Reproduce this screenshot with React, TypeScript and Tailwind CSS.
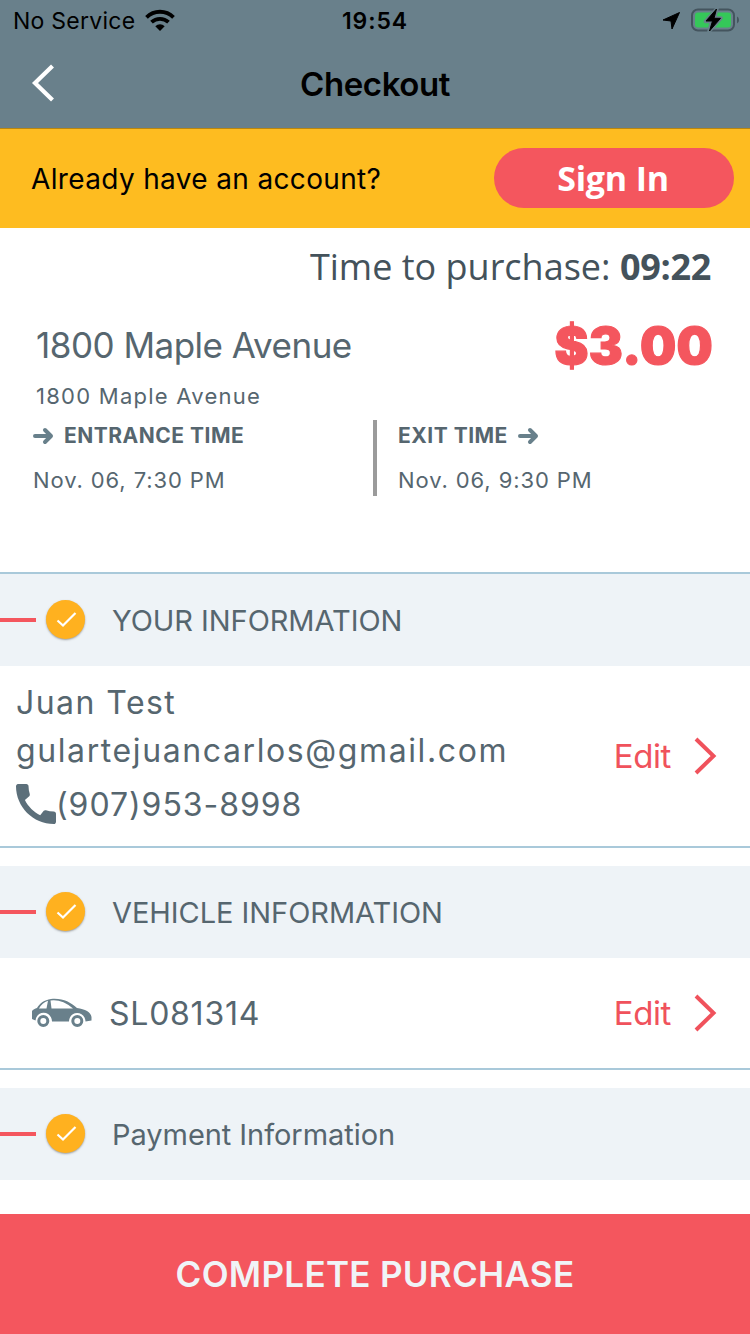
import React from "react";

const inter = "font-['Inter',sans-serif]";
const openSans = "font-['Open_Sans',sans-serif]";

function Arrow() {
  return (
    <svg width="22" height="18" viewBox="0 0 22 18" fill="none" stroke="#68808b" strokeWidth="4" strokeLinecap="round" strokeLinejoin="round">
      <path d="M3 9H18.500M13 3L19 9L13 15" />
    </svg>
  );
}

function SectionHeader({ title, spacing }: { title: string; spacing: string }) {
  return (
    <div className="flex h-[92px] shrink-0 items-center bg-[#eef3f7]">
      <div className="h-1 w-9 bg-[#f4565e]" />
      <div className="mb-[2px] ml-[10px] flex size-[39px] items-center justify-center rounded-full bg-[#ffb11f] shadow-[0_1px_2px_rgba(80,80,80,0.5)]">
        <svg width="39" height="39" viewBox="0 0 39 39" fill="none" stroke="#fff" strokeWidth="2.2">
          <path d="M11.500 20.500L17 25.500L29.500 13" />
        </svg>
      </div>
      <h2 className={`ml-[27px] pt-[2px] text-[29px] leading-[36px] whitespace-nowrap ${spacing}`}>{title}</h2>
    </div>
  );
}

function EditLink() {
  return (
    <button className="ml-auto flex items-center pr-[33px] text-[#f0525c]">
      <span className="text-[33px] leading-[40px] tracking-[-0.4px]">Edit</span>
      <svg className="ml-[23px]" width="23" height="38" viewBox="0 0 23 38" fill="none" stroke="currentColor" strokeWidth="4">
        <path d="M2 2L19.500 19L2 36" />
      </svg>
    </button>
  );
}

export default function App() {
  return (
    <div className={`flex h-[1334px] w-[750px] flex-col overflow-hidden bg-white text-[#56666f] ${inter}`}>
      <header className="h-[129px] shrink-0 border-b border-[#b8860f] bg-[#69808b] text-black">
        <div className="grid h-10 grid-cols-3 items-center">
          <div className="flex items-center pl-[13px]">
            <span className="pt-[2px] text-[23px] leading-[38px] tracking-[0.25px] whitespace-nowrap">No Service</span>
            <svg className="ml-[10px]" width="30" height="23" viewBox="0 0 30 23" fill="none" stroke="#000" strokeWidth="3.800">
              <path d="M1.500 8.300C9 .9 21 .9 28.500 8.300" />
              <path d="M6.500 13.200C11.300 8.700 18.700 8.700 23.500 13.200" />
              <path d="M10.300 17.300C13 14.600 17 14.600 19.700 17.300L15 22Z" fill="#000" stroke="none" />
            </svg>
          </div>
          <span className="pt-[2px] text-center text-[23px] leading-[38px] font-semibold tracking-[0.9px]">19:54</span>
          <div className="flex items-center justify-end pr-[10px]">
            <svg width="19" height="19" viewBox="0 0 19 19" fill="#000" stroke="#000" strokeLinejoin="round">
              <path d="M17.500 1.500L10 18L9 10L1 9Z" />
            </svg>
            <svg className="ml-[10px]" width="49" height="25" viewBox="0 0 49 25">
              <rect x="1" y="1.5" width="42" height="21" rx="6" fill="none" stroke="#44545e" strokeWidth="2" />
              <rect x="4" y="4.500" width="36" height="15" rx="3" fill="#35c759" />
              <path d="M46 8.500Q48 9 48 12T46 15.500Z" fill="#44545e" />
              <path d="M26 .5L14.500 13.500H20.500L18 23.500L30 10H23.500Z" fill="#000" stroke="#69808b" strokeWidth="3.500" strokeLinejoin="round" />
              <path d="M25.500 1L15 13H21.500L18.500 23L29.500 10.300H23Z" fill="#000" stroke="#000" strokeWidth="1" strokeLinejoin="round" />
            </svg>
          </div>
        </div>
        <div className="grid h-[88px] grid-cols-[1fr_auto_1fr] items-center">
          <svg className="mb-[2px] ml-[30px]" width="24" height="38" viewBox="0 0 24 38" fill="none" stroke="#fff" strokeWidth="4.2">
            <path d="M22.500 2L5 19L22.500 36" />
          </svg>
          <h1 className="text-[33px] leading-[40px] font-semibold tracking-[-0.4px]">Checkout</h1>
        </div>
      </header>

      <div className="flex h-[99px] shrink-0 items-center justify-between bg-[#febc20] pr-4 pl-[31px] text-black">
        <span className="text-[28px] leading-[36px] tracking-[0.35px]">Already have an account?</span>
        <button className={`mb-px flex h-[60px] w-[240px] items-center justify-center rounded-full bg-[#f4565e] text-[34px] leading-[60px] font-bold tracking-[-0.2px] text-white ${openSans}`}>
          <span className="mr-[2px]">Sign In</span>
        </button>
      </div>

      <main className="flex h-[344px] shrink-0 flex-col">
        <div className={`flex h-[78px] items-center justify-end pr-[39px] text-[36px] leading-[50px] whitespace-pre text-[#44525b] ${openSans}`}>
          <span>Time to purchase: </span>
          <span className="font-bold tracking-[-0.3px]">09:22</span>
        </div>
        <div className="flex h-[80px] items-center justify-between pr-[37px] pl-[36px]">
          <span className="pb-[2px] text-[35px] leading-[44px] tracking-[-0.5px]">1800 Maple Avenue</span>
          <span className="text-[51px] leading-[60px] font-black tracking-[0.3px] text-[#f4565e] [-webkit-text-stroke:1.2px_#f4565e]">$3.00</span>
        </div>
        <div className="h-[34px] pl-[36px] text-[22px] leading-[20px] tracking-[1.25px]">1800 Maple Avenue</div>
        <div className="flex h-[76px]">
          <div className="w-[373px] pl-[32px]">
            <div className="flex h-[32px] items-center text-[21px] font-bold tracking-[0.5px]">
              <Arrow />
              <span className="ml-[10px] leading-[32px]">ENTRANCE TIME</span>
            </div>
            <div className="mt-[12px] pl-px text-[22px] leading-[32px] tracking-[0.9px]">Nov. 06, 7:30 PM</div>
          </div>
          <div className="w-1 bg-[#9b9b9b]" />
          <div className="pl-[21px]">
            <div className="flex h-[32px] items-center text-[21px] font-bold tracking-[0.5px]">
              <span className="mr-[9px] leading-[32px]">EXIT TIME</span>
              <Arrow />
            </div>
            <div className="mt-[12px] text-[22px] leading-[32px] tracking-[0.9px]">Nov. 06, 9:30 PM</div>
          </div>
        </div>
      </main>

      <section className="h-[276px] shrink-0 border-y-2 border-[#a9c9da]">
        <SectionHeader title="YOUR INFORMATION" spacing="tracking-[-0.05px]" />
        <div className="flex h-[180px] items-center">
          <div className="pl-4 text-[32px]">
            <div className="h-[48px] pt-[2px] leading-[46px] tracking-[1.45px]">Juan Test</div>
            <div className="h-[48px] pt-[2px] leading-[46px] tracking-[1.6px]">gulartejuancarlos@gmail.com</div>
            <div className="flex h-[60px] items-center">
              <svg width="40" height="40" viewBox="3 3 18 18" fill="#5c6f7a">
                <path d="M20.010 15.380c-1.230 0-2.420-.2-3.530-.560a.977.977 0 0 0-1.010.240l-1.570 1.970c-2.830-1.350-5.480-3.900-6.890-6.830l1.950-1.660c.270-.280.350-.670.240-1.020-.370-1.110-.560-2.300-.560-3.530 0-.540-.450-.990-.990-.990H4.190C3.650 3 3 3.240 3 3.990 3 13.280 10.730 21 20.010 21c.710 0 .990-.630.990-1.180v-3.450c0-.540-.450-.990-.990-.990z" />
              </svg>
              <span className="pt-[2px] leading-[58px] tracking-[0.95px]">(907)953-8998</span>
            </div>
          </div>
          <EditLink />
        </div>
      </section>

      <section className="mt-[18px] h-[204px] shrink-0 border-b-2 border-[#a9c9da]">
        <SectionHeader title="VEHICLE INFORMATION" spacing="tracking-[-0.05px]" />
        <div className="flex h-[110px] items-center pl-8">
          <svg width="60" height="30" viewBox="0 0 60 30">
            <path d="M0 13C1 11.500 3 10.800 5 10C8 5 12 2 19 1C31 0 38 4 45 10C53 11 59 14 59.500 19V22.500L53.500 23.500C53 12.500 37.500 12 37 23.500H20C19.500 12 4.500 12 3.500 22.500L0 21Z" fill="#69808b" />
            <path d="M7 10.500Q10 5 16 2.800L14.500 10.500ZM18.500 2.500Q30 1 41 10.500H19.500Z" fill="#fff" />
            <circle cx="11.300" cy="23" r="4.500" fill="#fff" stroke="#69808b" strokeWidth="3" />
            <circle cx="45.300" cy="23" r="4.500" fill="#fff" stroke="#69808b" strokeWidth="3" />
          </svg>
          <span className="ml-[17px] pt-[2px] text-[32px] leading-[40px] tracking-[0.75px]">SL081314</span>
          <EditLink />
        </div>
      </section>

      <section className="mt-[18px] shrink-0">
        <SectionHeader title="Payment Information" spacing="tracking-[-0.05px]" />
      </section>

      <button className="mt-auto h-[120px] shrink-0 bg-[#f4565e] text-[35px] leading-[120px] font-semibold tracking-[0.3px] text-[#f0f4f7]">
        COMPLETE PURCHASE
      </button>
    </div>
  );
}
